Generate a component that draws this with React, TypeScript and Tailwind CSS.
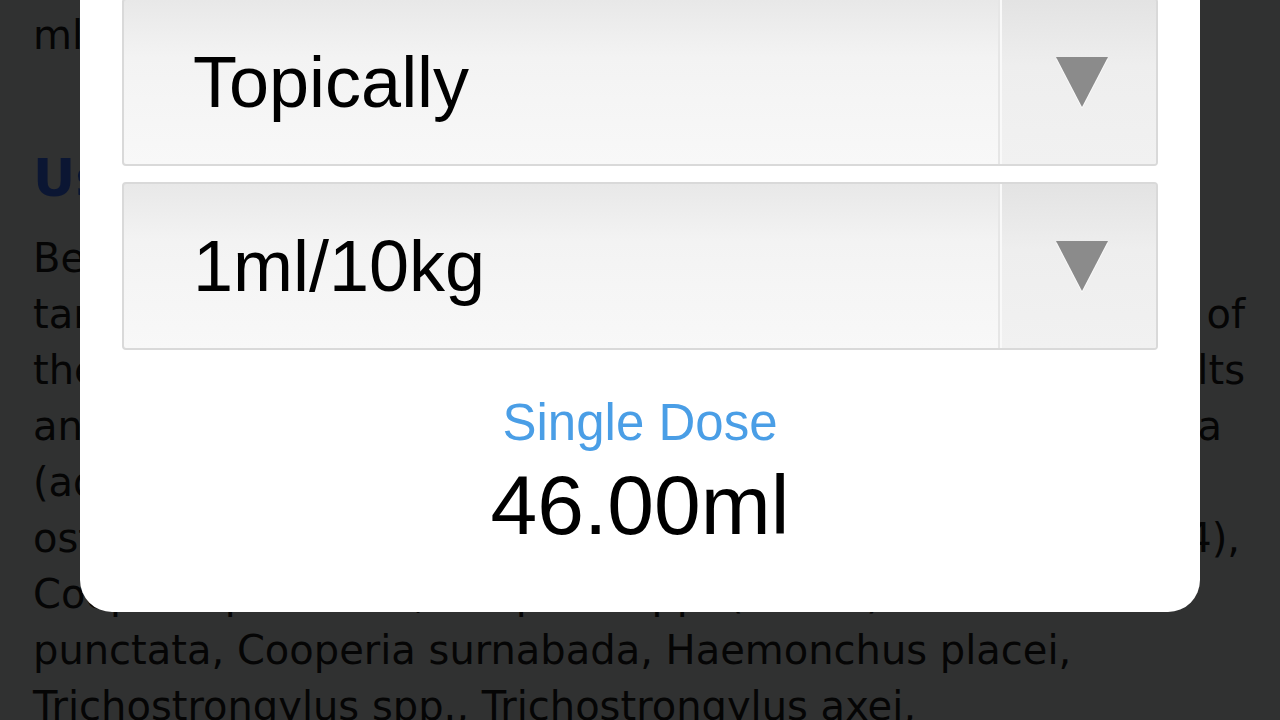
import React from "react";

const bodyLines: { text: string; justify?: boolean; pad?: string }[] = [
  { text: "Behaviour: broad spectrum parasiticide for" },
  { text: "targeted treatment and control of stages of", justify: true },
  { text: "the following parasites: Roundworms (adults", justify: true },
  { text: "and fourth stage larvae): Ostertagia lyrata", justify: true, pad: "pr-[23px]" },
  { text: "(adult and inhibited larval stages), Ostertagia" },
  { text: "ostertagi, Cooperia oncophora (adults, L4),", justify: true, pad: "pr-[5px]" },
  { text: "Cooperia pectinata, Cooperia spp. (adults)" },
  { text: "punctata, Cooperia surnabada, Haemonchus placei," },
  { text: "Trichostrongylus spp., Trichostrongylus axei," },
];

function Arrow() {
  return (
    <svg width="54" height="52" viewBox="0 0 54 52" aria-hidden>
      <polygon points="1,1 53,1 27,51" fill="#ffffff" opacity="0.7" transform="translate(0,2)" />
      <polygon points="1,1 53,1 27,51" fill="#8b8b8b" />
    </svg>
  );
}

function SelectBox({ value }: { value: string }) {
  return (
    <div className="flex h-[168px] overflow-hidden rounded-[4px] border-2 border-[#d9d9d9] bg-[linear-gradient(180deg,#e8e8e8_0%,#f3f3f3_35%,#f8f8f8_100%)]">
      <div className="flex flex-1 items-center pl-[69px] text-[72px] leading-none text-black">
        {value}
      </div>
      <div className="flex w-[158px] items-center justify-center border-l-2 border-[#e6e6e6] bg-[linear-gradient(180deg,#e3e3e3_0%,#eeeeee_40%,#f1f1f1_100%)] pl-[8px] shadow-[inset_2px_0_0_#f9f9f9]">
        <Arrow />
      </div>
    </div>
  );
}

export default function App() {
  return (
    <div className="relative h-[720px] w-[1280px] overflow-hidden bg-[#303131] font-['DejaVu_Sans',sans-serif] text-[#050505]">
      <div className="flex flex-col pl-[33px] pr-[35px] pt-[7px]">
        <div className="whitespace-nowrap text-[40px] leading-[56px]">
          ml per 10kg bodyweight along the back.
        </div>
        <div className="mt-[87px] whitespace-nowrap text-[52px] font-bold leading-[56px] text-[#0b1633]">
          Usage
        </div>
        <div className="mt-[24px] flex flex-col">
          {bodyLines.map((l, i) => (
            <div
              key={i}
              className={
                "whitespace-nowrap text-[40px] leading-[56px] " +
                (l.justify ? "[text-align-last:justify] text-justify " : "") +
                (l.pad ?? "")
              }
            >
              {l.text}
            </div>
          ))}
        </div>
      </div>

      <div className="absolute left-[80px] top-[-40px] flex w-[1120px] flex-col rounded-[32px] bg-white px-[42px] pb-[62px] pt-[38px] font-['Liberation_Sans',Arial,sans-serif]">
        <div className="flex flex-col gap-[16px]">
          <SelectBox value="Topically" />
          <SelectBox value="1ml/10kg" />
        </div>
        <div className="mt-[43px] text-center text-[51px] leading-[60px] text-[#4a9ee6]">
          Single Dose
        </div>
        <div className="mt-[7px] text-center text-[84px] leading-[90px] text-black">
          46.00ml
        </div>
      </div>
    </div>
  );
}
